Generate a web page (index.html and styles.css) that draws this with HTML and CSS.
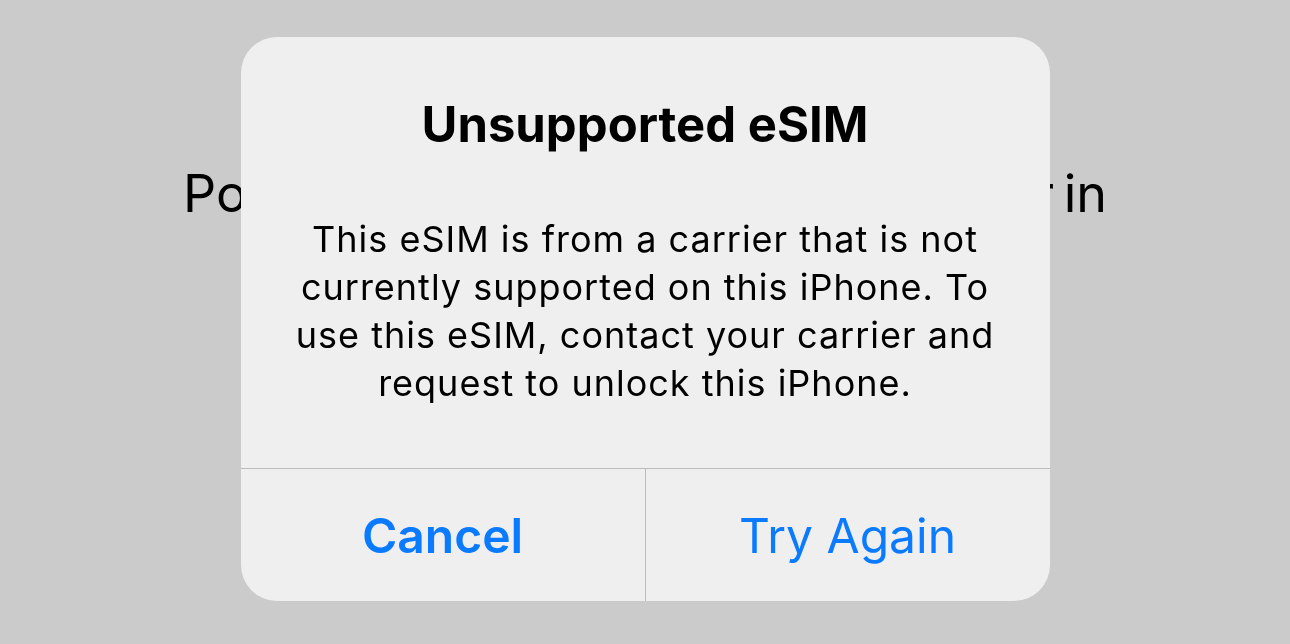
FILE: index.html
```html
<!DOCTYPE html>
<html lang="en">
<head>
    <meta charset="UTF-8">
    <meta name="viewport" content="width=device-width, initial-scale=1.0">
    <title>Unsupported eSIM</title>
    <link rel="stylesheet" href="styles.css">
</head>
<body>

    <!-- Page behind the alert -->
    <div class="page">
        <p class="page-text">
            <span>Position the code</span>
            <span>from your carrier in</span>
        </p>
    </div>

    <!-- Alert -->
    <div class="overlay">
        <div class="alert">
            <div class="alert-body">
                <h2 class="alert-title">Unsupported eSIM</h2>
                <p class="alert-message">This eSIM is from a carrier that is not<br>currently supported on this iPhone. To<br>use this eSIM, contact your carrier and<br>request to unlock this iPhone.</p>
            </div>
            <div class="alert-actions">
                <button class="alert-btn cancel">Cancel</button>
                <button class="alert-btn">Try Again</button>
            </div>
        </div>
    </div>

</body>
</html>
```

FILE: styles.css
```css
body {
    margin: 0;
    width: 1290px;
    height: 644px;
    overflow: hidden;
    background-color: #cbcbcb;
    font-family: Inter, "Noto Sans", sans-serif;
    color: #000;
}

.page {
    padding-top: 173px;
}

.page-text {
    display: flex;
    justify-content: space-between;
    width: 924px;
    margin: 0 auto;
    font-size: 52px;
    line-height: 42px;
    word-spacing: -5px;
    white-space: nowrap;
}

.overlay {
    position: fixed;
    top: 0;
    left: 0;
    right: 0;
    bottom: 0;
    display: flex;
    justify-content: center;
    align-items: flex-start;
    padding-top: 37px;
}

.alert {
    width: 809px;
    height: 564px;
    background-color: #efeff0;
    border-radius: 36px;
    display: flex;
    flex-direction: column;
    overflow: hidden;
}

.alert-body {
    flex: 1;
    padding: 60px 20px 0;
    text-align: center;
}

.alert-title {
    margin: 0 0 62px;
    font-size: 49px;
    line-height: 56px;
    font-weight: 700;
}

.alert-message {
    margin: 0;
    font-size: 36px;
    line-height: 48px;
    letter-spacing: 1px;
    white-space: nowrap;
}

.alert-actions {
    display: flex;
    height: 132px;
    border-top: 1px solid #bcbcbe;
}

.alert-btn {
    flex: 1;
    border: none;
    background: none;
    padding: 0;
    font-family: inherit;
    font-size: 48px;
    color: #0a7aff;
    cursor: pointer;
}

.alert-btn + .alert-btn {
    border-left: 1px solid #bcbcbe;
}

.alert-btn.cancel {
    font-weight: 600;
}
```
